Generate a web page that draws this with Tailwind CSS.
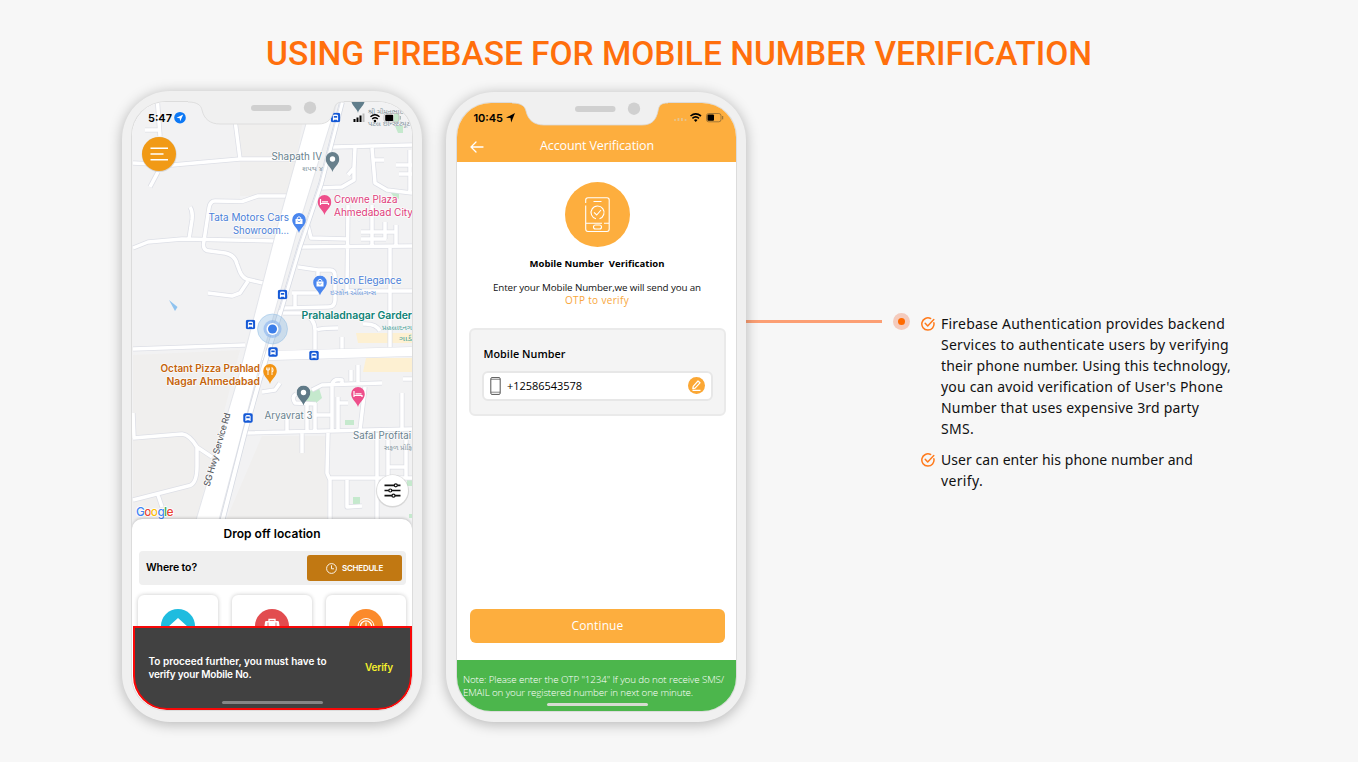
<!DOCTYPE html>
<html lang="en">
<head>
<meta charset="utf-8">
<title>Using Firebase for Mobile Number Verification</title>
<script src="https://cdn.jsdelivr.net/npm/@tailwindcss/browser@4"></script>
</head>
<body class="h-[762px] w-[1358px] overflow-hidden bg-[#f7f7f7] font-['Open_Sans',sans-serif] text-black">

<!-- Shared symbols -->
<svg class="hidden">
  <symbol id="notch" viewBox="0 0 300 60">
    <path d="M66 9 V11 C75 11 79 14 80 19 C82 28 88 33 98 33 H196 C206 33 210 28 212 19 C213 13 215 11 222 11 V9Z" fill="#f0f0f0"/>
    <path d="M66 11 C75 11 79 14 80 19 C82 28 88 33 98 33 H196 C206 33 210 28 212 19 C213 13 215 11 222 11" fill="none" stroke="#d9d9d9" stroke-width=".8"/>
    <rect x="129" y="14" width="40.500" height="6" rx="3" fill="#d0d0d0"/>
    <circle cx="188" cy="16.700" r="6.200" fill="#d0d0d0"/>
  </symbol>
  <symbol id="tick" viewBox="0 0 14 14">
    <path d="M12.900 5.800A6.100 6.100 0 1 1 9.600 1.500" fill="none" stroke="#ff7a1c" stroke-width="1.500" stroke-linecap="round"/>
    <path d="M4.200 6.300 6.700 8.900 12.800 2.500" fill="none" stroke="#ff7a1c" stroke-width="1.500" stroke-linecap="round" stroke-linejoin="round"/>
  </symbol>
  <symbol id="pin" viewBox="0 0 14 20">
    <path d="M7 20C6.300 15.500 .2 12.500 .2 6.900A6.800 6.800 0 0 1 13.800 6.900C13.800 12.500 7.700 15.500 7 20Z" fill="currentColor"/>
  </symbol>
  <symbol id="bus" viewBox="0 0 10 10">
    <rect x=".3" y=".3" width="9.400" height="9.400" rx="1.800" fill="#1559d6"/>
    <path d="M2.400 8V3.300Q2.400 2 5 2T7.600 3.300V8H6.600V7.200H3.400V8Z" fill="#fff"/>
    <rect x="3.300" y="3.500" width="3.400" height="1.700" fill="#1559d6"/>
  </symbol>
</svg>

<h1 class="flex h-[91px] justify-center pt-[34px] font-['Roboto',sans-serif] text-[33.500px] font-medium leading-[40px] whitespace-nowrap text-[#ff6f0c]"><span data-fit="826">USING FIREBASE FOR MOBILE NUMBER VERIFICATION</span></h1>

<main class="flex items-start pl-[122px]">

  <!-- Ride home screen -->
  <section class="relative h-[631px] w-[300px] rounded-[48px] bg-[#f0f0f0] px-[10px] pt-[11px] shadow-[0_2px_14px_rgba(0,0,0,0.28)]">
    <div class="relative flex h-[608px] w-[280px] flex-col overflow-hidden rounded-[34px] bg-white font-['Inter',sans-serif] ring-1 ring-[#dcdcdc]">
      <div class="h-[417px] shrink-0">
      <svg class="block h-[425px] w-[280px]" viewBox="132 102 280 425">
        <rect x="132" y="102" width="281" height="425" fill="#f2f2f3"/>
        <path d="M235 102H306L290 196H240V159Z M133 355 240 350 196 520H133Z M226 520 262 436H327V520Z" fill="#f0efee"/>
        <path d="M356 333H412V343H358Z M366 358H412V372H363Z" fill="#fdf0d2"/>
        <g fill="#c5e9cd">
          <path d="M388 189H399V199L394 197ZM395 126H403V133H398Z"/>
          <path d="M306 392 319 388 322 398 316 403 304 401Z"/>
          <path d="M345 420H354V425H345ZM353 497H360V504H353ZM407 478H412V486H407ZM409 514H412V518H409Z"/>
        </g>
        <path d="M169 300 177.500 307 175 311Z" fill="#8fc3ef"/>
        <defs>
          <g id="roads" fill="none" stroke-linejoin="round">
            <path d="M133 163 172 165 240 159H300M235 120 240 159M157.500 102 160 136M145 130H158M158 172 150 187"/>
            <path d="M288 196H258L242 201.500 215 201Q210 201 209 208L203.500 244Q203 251 210 251L225 253Q235 255 237 264L240 272Q243 279 250 280L263 283"/>
            <path d="M190 207Q193 211 192 220L189 239M133 248 148 242 182 239 275 241M248 281 240 293 232 296 208 293M133 349 245 345"/>
            <path d="M333 147 412 145M355 148 354 168 348 175M320 188 342 187 354 180V168M372 148 375 183 387 190 412 193M372 160H384M410 150V193M396 165H412M399 174H412"/>
            <path d="M298 247 412 246M307 222 311 238 348 239M348 205 347 291M372 205V246M361 232H396M361 239H386M385 222V239M396 225V246"/>
            <path d="M298 267 318 270H330Q335 270 335 276V300Q335 307 328 307L282 308M318 270V276M292 293H318M295 294V307"/>
            <path d="M283 313H302Q315 318 315 330V350M317 330Q320 328 338 328M342 337V349M390 248V349M363 324Q376 323 380 331M347 291H412"/>
            <path d="M243 433 412 429M262 392 275 390 280 383M312 390 322 385 382 383M332 432V384Q334 378 342 380V384M296 394Q291 397 295 403L316 404M315 403V432M307 403V432M287 418V432M302 433V453M315 415H332"/>
            <path d="M338 397V430M338 403H348M365 387 360 430M402 393V430M351 370V381M358 365V382M403 379H412"/>
            <path d="M328 433 327 473 330 480V520M330 478H412M377 433V520M347 480V507L362 506M388 440V478M406 440V478M388 467H406"/>
            <path d="M133 438 182 434Q190 435 197 447L212 457M197 447V466Q197 485 188 486L133 500M158 495 162 507M133 413 134 438"/>
          </g>
        </defs>
        <use href="#roads" stroke="#dddfe6" stroke-width="5"/>
        <use href="#roads" stroke="#fff" stroke-width="3.500"/>
        <path d="M262 356 412 351.500" stroke="#dddfe6" stroke-width="10"/>
        <path d="M255 356 412 351.500" stroke="#fff" stroke-width="8.800"/>
        <path d="M312 102H337L298 228 258 372 219 520H196L239 375 277 228Z" fill="#fff" stroke="#dddfe6" stroke-width=".8"/>
        <path d="M342 102 321 184 300 246 281 310 259 382 245 432 222 522" fill="none" stroke="#d5d9e2" stroke-width="5.500"/>
        <path d="M342 102 321 184 300 246 281 310 259 382 245 432 222 522" fill="none" stroke="#fff" stroke-width="4"/>
        <path d="M340.500 102 319.500 184 298.500 246 279.500 310" fill="none" stroke="#d5d9e2" stroke-width=".7"/>

        <!-- Bus stops -->
        <use href="#bus" x="330.500" y="112.500" width="10" height="10"/>
        <use href="#bus" x="277.500" y="289.500" width="10" height="10"/>
        <use href="#bus" x="245.500" y="319.500" width="10" height="10"/>
        <use href="#bus" x="268" y="347" width="10" height="10"/>
        <use href="#bus" x="309" y="350.500" width="10" height="10"/>
        <use href="#bus" x="243" y="413" width="10" height="10"/>

        <!-- Current position -->
        <circle cx="272.500" cy="329" r="15" fill="#6fa8dc" fill-opacity=".3" stroke="#8dbbe3" stroke-opacity=".6" stroke-width=".8"/>
        <circle cx="272.500" cy="329" r="9" fill="#7aa9ee" fill-opacity=".5"/>
        <circle cx="272.500" cy="329" r="6" fill="#fff"/>
        <circle cx="272.500" cy="329" r="4.500" fill="#3b7de9"/>

        <!-- Pins -->
        <use href="#pin" x="351" y="93" width="14" height="20" color="#607d8b"/>
        <use href="#pin" x="325.500" y="152" width="14" height="20" color="#68808c"/><circle cx="332.500" cy="159" r="2.700" fill="#fff"/>
        <use href="#pin" x="317.500" y="195" width="14" height="20" color="#ee4f8b"/>
        <path d="M320.500 199V205M320.500 203.500H328.500V205M322 201.800H328" stroke="#fff" stroke-width="1.200" fill="none"/>
        <use href="#pin" x="292" y="213" width="14" height="20" color="#4a86ee"/>
        <path d="M295.500 219H302.500V224H295.500Z" fill="#fff"/><path d="M297.200 219V217.800Q299 215.500 300.800 217.800V219" stroke="#fff" fill="none"/><path d="M297.500 220.800Q299 222.800 300.500 220.800" stroke="#4a86ee" stroke-width=".8" fill="none"/>
        <use href="#pin" x="313" y="275.500" width="14" height="20" color="#4a86ee"/>
        <path d="M316.500 281.500H323.500V286.500H316.500Z" fill="#fff"/><path d="M318.200 281.500V280.300Q320 278 321.800 280.300V281.500" stroke="#fff" fill="none"/><path d="M318.500 283.300Q320 285.300 321.500 283.300" stroke="#4a86ee" stroke-width=".8" fill="none"/>
        <use href="#pin" x="263" y="364" width="14" height="20" color="#f29414"/>
        <path d="M268 367.500V375M266.700 367.500V370H269.300V367.500M272 375V367.500Q273.500 368.500 273 371.500H272" stroke="#fff" stroke-width=".9" fill="none"/>
        <use href="#pin" x="296.500" y="385.500" width="14" height="20" color="#607a87"/><circle cx="303.500" cy="392.500" r="2.700" fill="#fff"/>
        <use href="#pin" x="351" y="387" width="14" height="20" color="#ee4f8b"/>
        <path d="M354 391V397M354 395.500H362V397M355.500 393.800H361.500" stroke="#fff" stroke-width="1.200" fill="none"/>

        <!-- Gujarati place names -->
        <g font-family="'Noto Sans Gujarati','Noto Sans',sans-serif" font-size="7" fill="#8496a0" lengthAdjust="spacingAndGlyphs">
          <text x="302" y="171" textLength="21" lengthAdjust="spacingAndGlyphs">શપથ ૪</text>
          <text x="368" y="114" textLength="36" lengthAdjust="spacingAndGlyphs">શ્રી ચીમનભાઈ</text>
          <text x="368" y="125.500" textLength="42" lengthAdjust="spacingAndGlyphs">પટેલ ઇન્સ્ટિટ્યૂટ</text>
          <text x="384" y="449.500" textLength="28" lengthAdjust="spacingAndGlyphs">સફળ પ્રોફિ</text>
          <text x="330" y="295" fill="#6f9be0" textLength="46" lengthAdjust="spacingAndGlyphs">ઇસ્કોન એલિગન્સ</text>
          <text x="382" y="330" fill="#4fa79d" textLength="30" lengthAdjust="spacingAndGlyphs">પ્રહલાદનગ</text>
          <text x="399" y="341" fill="#4fa79d" textLength="13" lengthAdjust="spacingAndGlyphs">ગાર્ડ</text>
        </g>

        <!-- Labels -->
        <g font-size="9.800" stroke="#fff" stroke-width="1.600" stroke-linejoin="round" stroke-opacity=".8" paint-order="stroke">
          <g fill="#68818d">
            <text x="271.500" y="160" textLength="50.500" lengthAdjust="spacingAndGlyphs">Shapath IV</text>
            <text x="264.500" y="418.500" textLength="48" lengthAdjust="spacingAndGlyphs">Aryavrat 3</text>
            <text x="353" y="438.500" textLength="58" lengthAdjust="spacingAndGlyphs">Safal Profitai</text>
          </g>
          <g fill="#df3d7b">
            <text x="334" y="202.500" textLength="63.500" lengthAdjust="spacingAndGlyphs">Crowne Plaza</text>
            <text x="334" y="216" textLength="79" lengthAdjust="spacingAndGlyphs">Ahmedabad City</text>
          </g>
          <g fill="#4a80d8">
            <text x="208.500" y="220.500" textLength="80.500" lengthAdjust="spacingAndGlyphs">Tata Motors Cars</text>
            <text x="233" y="233.500" textLength="56" lengthAdjust="spacingAndGlyphs">Showroom...</text>
            <text x="330" y="283.500" textLength="71.500" lengthAdjust="spacingAndGlyphs">Iscon Elegance</text>
          </g>
          <text x="301.500" y="318.500" textLength="110.500" lengthAdjust="spacingAndGlyphs" fill="#0c8276" font-weight="600">Prahaladnagar Garder</text>
          <g fill="#c5640b" font-weight="600">
            <text x="160.500" y="371.500" textLength="99.500" lengthAdjust="spacingAndGlyphs">Octant Pizza Prahlad</text>
            <text x="166.500" y="384.500" textLength="93.500" lengthAdjust="spacingAndGlyphs">Nagar Ahmedabad</text>
          </g>
          <text transform="translate(209.500 487) rotate(-74)" font-size="9" font-weight="500" fill="#5d6166" textLength="76">SG Hwy Service Rd</text>
        </g>
        <text x="136" y="515.500" font-size="12" font-weight="500" textLength="37.500" stroke="#fff" stroke-width="1.500" paint-order="stroke"><tspan fill="#4285f4">G</tspan><tspan fill="#ea4335">o</tspan><tspan fill="#fbbc05">o</tspan><tspan fill="#4285f4">g</tspan><tspan fill="#34a853">l</tspan><tspan fill="#ea4335">e</tspan></text>

        <!-- Status bar -->
        <text x="148" y="121.700" font-size="11" font-weight="600" textLength="24">5:47</text>
        <circle cx="180" cy="117.700" r="5.800" fill="#0c78f5"/>
        <path d="M183.200 114.500 176.500 117.700 179.700 118.200 180.200 121.300Z" fill="#fff"/>
        <path d="M353.500 119h2v3h-2zM356.500 117.500h2v4.500h-2zM359.500 115.500h2v6.500h-2z"/><path d="M362.500 113.500h2v8.500h-2z" fill="#bbb"/>
        <path d="M370.500 116.700Q375 112.700 379.500 116.700M372.200 119Q375 116.500 377.800 119" stroke="#000" stroke-width="1.400" fill="none"/><circle cx="375" cy="121" r="1.200"/>
        <path d="M394 113.800H396.800Q399 113.800 399 116V119.500Q399 121.700 396.800 121.700H394Z" fill="#c5e9cd"/>
        <rect x="384" y="113.500" width="15" height="8.500" rx="2.200" fill="none" stroke="#aaa" stroke-width=".6"/><rect x="385.200" y="114.700" width="8" height="6.200" rx="1"/><path d="M400.300 116v3.600" stroke="#9aa"/>

        <!-- Menu and filter buttons -->
        <circle cx="159.200" cy="154.500" r="17.500" fill="#b9b9b9" fill-opacity=".5"/>
        <circle cx="159" cy="154" r="17" fill="#f19a16"/>
        <path d="M150.500 148.300H168M150.500 154H163.500M150.500 159.700H168" stroke="#fff" stroke-width="1.500"/>
        <circle cx="392.500" cy="491" r="16.600" fill="#bbb" fill-opacity=".5"/>
        <circle cx="392.500" cy="490.500" r="15.500" fill="#fff"/>
        <path d="M384.500 485.300H400.500M384.500 490.500H400.500M384.500 495.700H400.500" stroke="#111" stroke-width="1.700"/>
        <g fill="#fff" stroke="#111" stroke-width="1.200"><circle cx="395.800" cy="485.300" r="1.500"/><circle cx="390.300" cy="490.500" r="1.500"/><circle cx="393.500" cy="495.700" r="1.500"/></g>
      </svg>
      </div>

      <div class="relative flex h-[107px] shrink-0 flex-col rounded-t-[10px] bg-white pt-[7px] shadow-[0_-1px_3px_rgba(0,0,0,0.2)]">
        <div class="flex justify-center text-[12px] leading-4 font-semibold whitespace-nowrap"><span data-fit="97">Drop off location</span></div>
        <div class="mr-[6px] ml-[7px] mt-[9px] flex h-[34px] items-center justify-between rounded-sm bg-[#efefef] pr-1 pl-[7px]">
          <span class="text-[10.500px] font-semibold whitespace-nowrap" data-fit="51">Where to?</span>
          <span class="flex h-[26px] w-[95px] items-center justify-center gap-[5px] rounded-[3px] bg-[#c17812] text-white">
            <svg class="size-[11px]" viewBox="0 0 11 11" fill="none" stroke="#fff" stroke-width=".9"><circle cx="5.500" cy="5.500" r="4.900"/><path d="M5.500 2.300V5.800H8"/></svg>
            <span class="text-[8px] font-semibold whitespace-nowrap" data-fit="41">SCHEDULE</span>
          </span>
        </div>
        <div class="mt-[6px] flex h-[35px] gap-[14px] overflow-hidden px-[6px] pt-1">
          <div class="flex h-[60px] w-[80px] justify-center rounded-[6px] pt-[14px] shadow-[0_0_4px_rgba(0,0,0,0.22)]">
            <svg class="size-[34px]" viewBox="0 0 34 34"><circle cx="17" cy="17" r="17" fill="#1fbcdf"/><path d="M17 9 27 18H23V25H11V18H7Z" fill="#fff"/></svg>
          </div>
          <div class="flex h-[60px] w-[80px] justify-center rounded-[6px] pt-[14px] shadow-[0_0_4px_rgba(0,0,0,0.22)]">
            <svg class="size-[34px]" viewBox="0 0 34 34"><circle cx="17" cy="17" r="17" fill="#e24c4f"/><path d="M10 13Q10 12 11.500 12H22.500Q24 12 24 13L24.500 17H9.500Z" fill="#fff"/><path d="M14 12.500V10.500H20V12.500" fill="none" stroke="#fff" stroke-width="1.300"/><path d="M13 13.500V17M21 13.500V17" stroke="#e24c4f" stroke-width=".8"/></svg>
          </div>
          <div class="flex h-[60px] w-[80px] justify-center rounded-[6px] pt-[14px] shadow-[0_0_4px_rgba(0,0,0,0.22)]">
            <svg class="size-[34px]" viewBox="0 0 34 34" fill="none" stroke="#fff"><circle cx="17" cy="17" r="17" fill="#fb8a2b" stroke="none"/><circle cx="17" cy="17.500" r="8" stroke-width="1"/><circle cx="17" cy="17.500" r="5.600" stroke-width="1.300"/><path d="M17 13.500V18H20" stroke-width="1.200"/></svg>
          </div>
        </div>
      </div>

      <div class="relative ml-px flex h-[84px] shrink-0 flex-col rounded-b-[34px] border-2 border-[#f80808] bg-[#414141]">
        <div class="flex items-center justify-between pt-[26.500px] pr-[17px] pl-[13.500px] text-[10px] leading-[13.500px] font-semibold whitespace-nowrap">
          <p class="text-white"><span class="block" data-fit="178">To proceed further, you must have to</span><span class="block" data-fit="103">verify your Mobile No.</span></p>
          <span class="text-[#f4ee2c]" data-fit="28">Verify</span>
        </div>
        <div class="mx-auto mt-[19px] h-[3.500px] w-[101px] rounded-full bg-[#868686]"></div>
      </div>
    </div>
    <svg class="absolute top-0 left-0 h-[60px] w-[300px]"><use href="#notch"/></svg>
  </section>

  <!-- Account verification screen -->
  <section class="relative mt-px ml-6 h-[630px] w-[300px] rounded-[48px] bg-[#f0f0f0] px-[11px] pt-[11px] shadow-[0_2px_14px_rgba(0,0,0,0.28)]">
    <div class="flex h-[608px] w-[279px] flex-col overflow-hidden rounded-[34px] bg-white ring-1 ring-[#dcdcdc]">
      <div class="h-[59px] shrink-0 bg-[#fdae3e]">
        <svg class="block h-7 w-full" viewBox="457 103 279 28">
          <text x="473.500" y="121.700" font-family="Inter" font-size="11" font-weight="600" textLength="29.500">10:45</text>
          <path d="M515 113 506 117.700 510.500 118 511.200 122.500Z"/>
          <g fill="#e8c48c"><circle cx="675" cy="120" r="1"/><rect x="677.500" y="118" width="1.800" height="3"/><rect x="681" y="118" width="1.800" height="3"/><circle cx="685.500" cy="120" r="1"/></g>
          <path d="M690.500 116Q695.700 111.800 701 116M692.400 118.300Q695.700 115.600 699 118.300" stroke="#000" stroke-width="1.600" fill="none"/><path d="M693.900 120Q695.700 118.700 697.500 120L695.700 122Z"/>
          <rect x="706.500" y="113.500" width="14.500" height="8.300" rx="2.200" fill="none" stroke="#8d6a33" stroke-width=".8"/><rect x="707.500" y="114.500" width="6.500" height="6.300" rx="1"/><path d="M722.700 116v3.400" stroke="#8d6a33"/>
        </svg>
        <div class="flex h-[31px] items-center pl-[13px] text-white">
          <svg class="h-[12px] w-[14px]" viewBox="0 0 14 12" fill="none" stroke="#fff" stroke-width="1.300" stroke-linecap="round" stroke-linejoin="round"><path d="M13 6H1M6 1 1 6 6 11"/></svg>
          <span class="ml-[56px] text-[12.500px] whitespace-nowrap" data-fit="114">Account Verification</span>
        </div>
      </div>
      <div class="flex flex-col items-center pt-5 pl-px">
        <svg class="size-[65px]" viewBox="0 0 65 65" fill="none" stroke="#fff" stroke-width="1.100">
          <circle cx="32.500" cy="32.500" r="32.500" fill="#fdae3e" stroke="none"/>
          <path d="M20.700 21V18Q20.700 15.700 23 15.700H42Q44.200 15.700 44.200 18V47Q44.200 49.500 42 49.500H23Q20.700 49.500 20.700 47V23.500M28.500 19.500H36.500M20.700 41.200H37M39 41.200H44.200"/>
          <path d="M31 36.800A6.500 6.500 0 1 1 34.500 36.700M29 30.300 31.700 33 36 28"/><rect x="28.500" y="43" width="8" height="4" rx="2"/>
        </svg>
        <h2 class="mt-[10px] text-[9.500px] leading-[14px] font-bold whitespace-pre" data-fit="135">Mobile Number  Verification</h2>
        <p class="mt-[9.500px] text-[9.800px] leading-[13.400px] whitespace-nowrap text-[#111]" data-fit="208">Enter your Mobile Number,we will send you an</p>
        <p class="text-[10px] leading-[13.400px] whitespace-nowrap text-[#f8a63a]" data-fit="64">OTP to verify</p>
      </div>
      <div class="mt-[21px] ml-[12px] h-[88px] w-[257px] shrink-0 rounded-[6px] border-2 border-[#eaeaea] bg-[#f4f4f4] px-[11px] pt-[15.500px]">
        <div class="flex pl-[1.500px] text-[10.800px] leading-[16px] font-semibold whitespace-nowrap"><span data-fit="82">Mobile Number</span></div>
        <div class="mt-[9px] flex h-[30px] items-center rounded-[6px] border-2 border-[#e7e7e7] bg-white pr-[6px] pl-[6px]">
          <svg class="h-[18px] w-[11px]" viewBox="0 0 11 18" fill="none" stroke="#555"><rect x=".8" y=".6" width="9.400" height="16.800" rx="1.200" stroke-width="1"/><path d="M1 2.300H10M1 15.200H10" stroke-width=".7"/></svg>
          <span class="ml-[6px] text-[11px] whitespace-nowrap" data-fit="75">+12586543578</span>
          <svg class="ml-auto size-[17px]" viewBox="0 0 17 17" fill="none" stroke="#fff" stroke-linejoin="round"><circle cx="8.500" cy="8.500" r="8.500" fill="#fba734" stroke="none"/><path d="M4.800 11.600 5.200 9.300 10 4 12 5.800 7.100 11.100Z M4.500 13.300H12.500" stroke-width="1.200"/></svg>
        </div>
      </div>
      <div class="mt-auto ml-[13px] flex h-[34px] w-[255px] shrink-0 items-center justify-center rounded-[6px] bg-[#fdae3e] text-[12px] whitespace-nowrap text-white"><span data-fit="52">Continue</span></div>
      <div class="mt-[17px] flex h-[51px] shrink-0 flex-col bg-[#4cb64c] pt-[12.500px] pl-[6px] text-[9.800px] leading-[13px] font-light whitespace-nowrap text-white">
        <p><span class="block" data-fit="261">Note: Please enter the OTP "1234" If you do not receive SMS/</span><span class="block" data-fit="230">EMAIL on your registered number in next one minute.</span></p>
        <div class="mt-[4.500px] ml-[84px] h-[3px] w-[101px] shrink-0 rounded-full bg-[#d6dcd2]"></div>
      </div>
    </div>
    <svg class="absolute top-0 left-0 h-[60px] w-[300px]"><use href="#notch"/></svg>
  </section>

  <!-- Callout -->
  <div class="mt-[229px] h-[3px] w-[136px] bg-[#fc9f74]"></div>
  <div class="mt-[222px] ml-[11px] flex size-[17px] items-center justify-center rounded-full bg-[#f4cbbd]"><div class="size-[7.500px] rounded-full bg-[#ff6a00]"></div></div>
  <ul class="mt-[222px] ml-[11px] flex flex-col gap-[10px] font-['Noto_Sans',sans-serif] text-[14px] leading-[21px] whitespace-nowrap text-[#111]">
    <li class="flex gap-[6px]">
      <svg class="mt-[4px] size-[14px]"><use href="#tick"/></svg>
      <p><span class="block" data-fit="284">Firebase Authentication provides backend</span><span class="block" data-fit="288">Services to authenticate users by verifying</span><span class="block" data-fit="290">their phone number. Using this technology,</span><span class="block" data-fit="282">you can avoid verification of User's Phone</span><span class="block" data-fit="258">Number that uses expensive 3rd party</span><span class="block" data-fit="33">SMS.</span></p>
    </li>
    <li class="flex gap-[6px]">
      <svg class="mt-[4px] size-[14px]"><use href="#tick"/></svg>
      <p><span class="block" data-fit="252">User can enter his phone number and</span><span class="block" data-fit="42">verify.</span></p>
    </li>
  </ul>
</main>

<script>
  // Spread each line's letters so that it fills its set width
  function fitLines() {
    document.querySelectorAll('[data-fit]').forEach(el => {
      el.style.letterSpacing = '0px';
      const range = document.createRange();
      range.selectNodeContents(el);
      const width = range.getBoundingClientRect().width;
      el.style.letterSpacing = (el.dataset.fit - width) / el.textContent.length + 'px';
    });
  }
  window.addEventListener('load', () => {
    fitLines();
    document.fonts.ready.then(fitLines);
    requestAnimationFrame(fitLines);
  });
</script>
</body>
</html>
